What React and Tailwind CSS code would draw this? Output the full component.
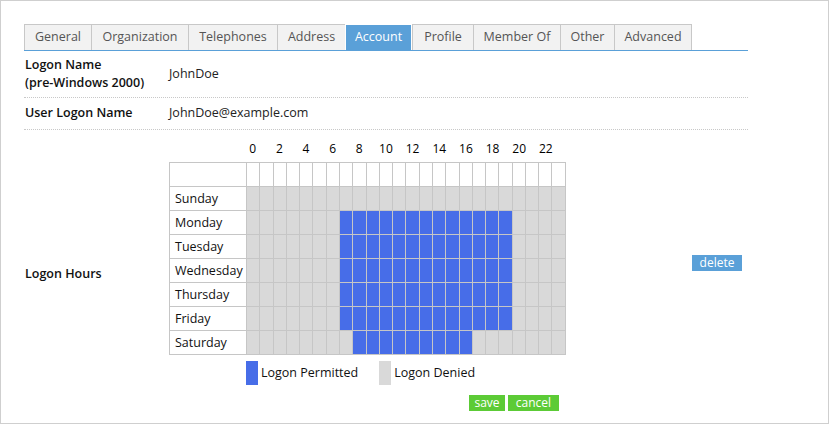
import React from 'react';

const tabs = [
    { name: 'General', w: 'w-[67px]' },
    { name: 'Organization', w: 'w-[97px]' },
    { name: 'Telephones', w: 'w-[89px]' },
    { name: 'Address', w: 'w-[68px]' },
    { name: 'Account', w: 'w-[67px]', active: true },
    { name: 'Profile', w: 'w-[61px]' },
    { name: 'Member Of', w: 'w-[87px]' },
    { name: 'Other', w: 'w-[54px]' },
    { name: 'Advanced', w: 'w-[78px]' },
];

const days = ['Sunday', 'Monday', 'Tuesday', 'Wednesday', 'Thursday', 'Friday', 'Saturday'];
const hours = Array.from({ length: 24 }, (_, i) => i);

// permitted ranges per day, [from, to) in hours
const permitted = {
    Monday: [7, 20],
    Tuesday: [7, 20],
    Wednesday: [7, 20],
    Thursday: [7, 20],
    Friday: [7, 20],
    Saturday: [8, 17],
};

function isPermitted(day, h) {
    const r = permitted[day];
    return r ? h >= r[0] && h < r[1] : false;
}

const rowClass = 'flex border-b border-dotted border-[#c8c8c8]';
const labelClass = 'w-[145px] shrink-0 pl-[1px] font-semibold text-[#111]';

function HoursGrid() {
    return (
        <div className="w-[397px]">
            <div className="flex h-[18px] pl-[77px] text-[12px] leading-[18px] text-black">
                {hours.map((h) => (
                    <div key={h} className="relative flex-1">
                        {h % 2 === 0 ? <span className="absolute left-1/2 -translate-x-1/2 whitespace-nowrap">{h}</span> : null}
                    </div>
                ))}
            </div>
            <table className="mt-[4px] w-[397px] table-fixed border-collapse border border-[#c6c6c6]">
                <colgroup>
                    <col className="w-[77px]" />
                    {hours.map((h) => (
                        <col key={h} />
                    ))}
                </colgroup>
                <tbody>
                    <tr className="h-[24px]">
                        <td className="border border-[#c6c6c6] bg-white" />
                        {hours.map((h) => (
                            <td key={h} className="border border-[#c6c6c6] bg-white" />
                        ))}
                    </tr>
                    {days.map((d) => (
                        <tr key={d} className="h-[24px]">
                            <td className="whitespace-nowrap border border-[#c6c6c6] bg-white pl-[5px] leading-[22px] text-[#111]">{d}</td>
                            {hours.map((h) => (
                                <td
                                    key={h}
                                    className={
                                        isPermitted(d, h)
                                            ? 'border border-[#c6c6c6] bg-[#476de8]'
                                            : 'border border-[#c6c6c6] bg-[#d9d9d9]'
                                    }
                                />
                            ))}
                        </tr>
                    ))}
                </tbody>
            </table>
            <div className="mt-[6px] flex h-[24px] items-center pl-[77px] text-[#111]">
                <span className="h-[24px] w-[12px] bg-[#476de8]" />
                <span className="ml-[3px]">Logon Permitted</span>
                <span className="ml-[21px] h-[24px] w-[12px] bg-[#d9d9d9]" />
                <span className="ml-[3px]">Logon Denied</span>
            </div>
            <div className="mt-[10px] flex justify-end gap-[3px] pr-[7px]">
                <button className="h-[16px] w-[36px] bg-[#5ccb36] text-[12px] leading-[16px] text-white">save</button>
                <button className="h-[16px] w-[51px] bg-[#5ccb36] text-[12px] leading-[16px] text-white">cancel</button>
            </div>
        </div>
    );
}

export default function App() {
    return (
        <div
            className="h-[424px] w-[829px] border border-[#cfcfcf] bg-white pl-[23px] pt-[23px] text-[12.5px] text-[#222]"
            style={{ fontFamily: '"Open Sans", "DejaVu Sans", sans-serif' }}
        >
            <div className="w-[724px]">
                <div className="flex border-b border-[#5aa0d8]">
                    {tabs.map((t, i) =>
                        t.active ? (
                            <div
                                key={t.name}
                                className={`${t.w} flex h-[26px] items-center justify-center border border-b-0 border-white bg-[#5aa0d8] text-white`}
                            >
                                {t.name}
                            </div>
                        ) : (
                            <div
                                key={t.name}
                                className={`${t.w} flex h-[26px] items-center justify-center border-t border-[#c8c8c8] bg-[#f2f2f2] text-[#555] ${
                                    i === tabs.length - 1 ? 'border-x' : 'border-l'
                                }`}
                            >
                                {t.name}
                            </div>
                        )
                    )}
                </div>

                <div className={`${rowClass} h-[47px] items-center`}>
                    <div className={`${labelClass} leading-[18px]`}>
                        Logon Name
                        <br />
                        (pre-Windows 2000)
                    </div>
                    <div>JohnDoe</div>
                </div>

                <div className={`${rowClass} h-[32px] items-center`}>
                    <div className={labelClass}>User Logon Name</div>
                    <div>JohnDoe@example.com</div>
                </div>

                <div className="flex h-[288px]">
                    <div className={`${labelClass} self-center`}>Logon Hours</div>
                    <div className="pt-[10px]">
                        <HoursGrid />
                    </div>
                    <div className="flex flex-1 justify-end pr-[6px] pt-[125px]">
                        <button className="h-[16px] w-[50px] bg-[#5aa0d8] text-[12px] leading-[16px] text-white">delete</button>
                    </div>
                </div>
            </div>
        </div>
    );
}
